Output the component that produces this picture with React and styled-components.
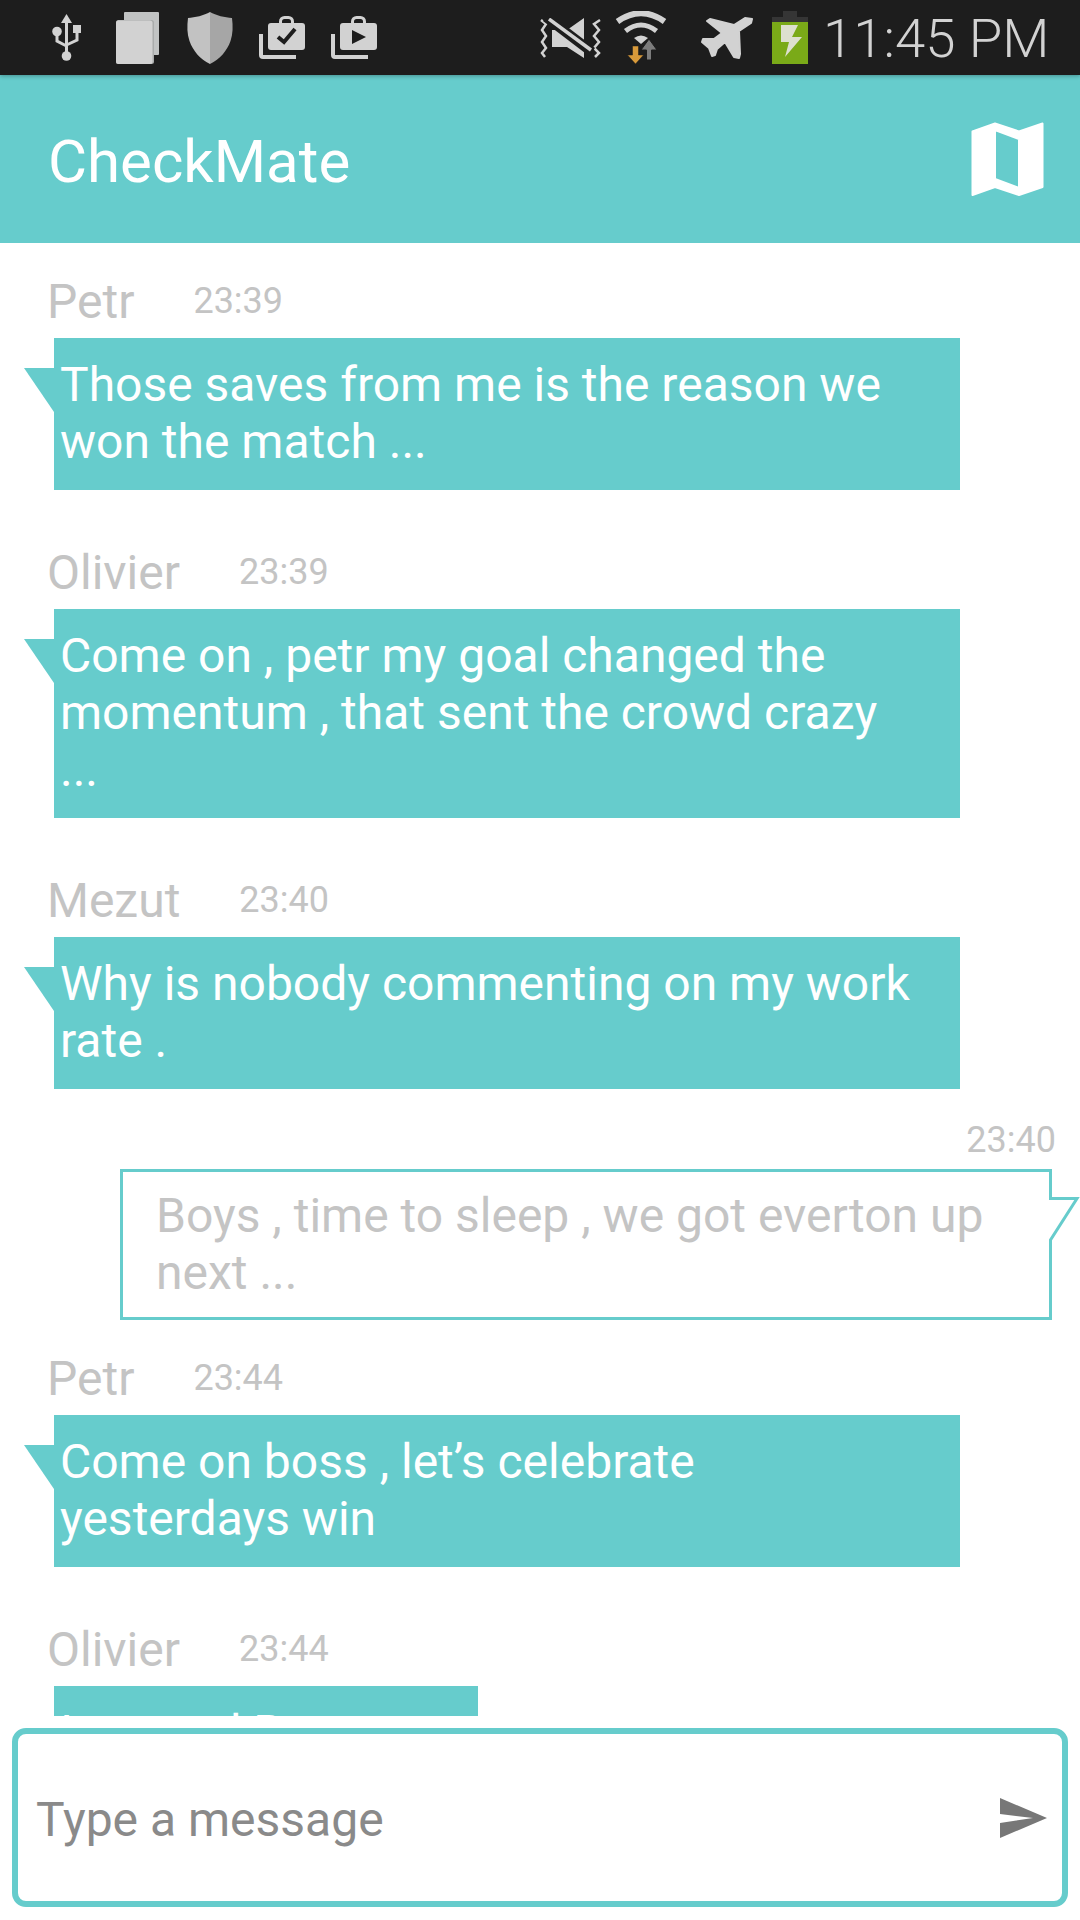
import React from "react";
import styled, {createGlobalStyle} from "styled-components";

const TEAL = "#66cccc";
const ICON = "#d2d2d2";

const GlobalStyle = createGlobalStyle`
  html, body {
    margin: 0;
    padding: 0;
    background: #fff;
    font-family: Roboto, "Liberation Sans", sans-serif;
  }
`

const Screen = styled.div`
  width: 1080px;
  height: 1920px;
  display: flex;
  flex-direction: column;
  overflow: hidden;
  background: #fff;
`

const StatusBar = styled.div`
  height: 75px;
  flex: none;
  display: flex;
  align-items: center;
  background: #1d1d1d;
  box-shadow: 0 1px 4px rgba(0, 0, 0, 0.3);
  z-index: 1;
`

const StatusIcon = styled.svg`
  flex: none;
  display: block;
  margin-left: ${props => props.$left}px;
`

const Clock = styled.span`
  margin-left: 15px;
  font-size: 54.500px;
  font-weight: 300;
  color: ${ICON};
  white-space: nowrap;
`

const Header = styled.div`
  box-sizing: border-box;
  height: 168px;
  flex: none;
  display: flex;
  align-items: center;
  justify-content: space-between;
  padding: 0 36px 0 48px;
  background: ${TEAL};
`

const Title = styled.h1`
  margin: 4px 0 0;
  font-size: 60px;
  font-weight: 400;
  color: #fff;
`

const MessageList = styled.div`
  height: 1473px;
  flex: none;
  overflow: hidden;
`

const Incoming = styled.div`
  padding: 25px 0 24px;
`

const Head = styled.div`
  box-sizing: border-box;
  height: 70px;
  display: flex;
  align-items: center;
  gap: 59px;
  padding: 0 0 4px 47px;
`

const Name = styled.span`
  font-size: 48px;
  color: #c4c4c4;
`

const Time = styled.span`
  font-size: 36px;
  color: #c4c4c4;
`

const OutHead = styled.div`
  box-sizing: border-box;
  height: 56px;
  display: flex;
  align-items: center;
  justify-content: flex-end;
  padding: 0 24px 3px 0;
`

const Bubble = styled.div`
  position: relative;
  box-sizing: border-box;
  width: ${props => props.$width || 906}px;
  margin-left: 54px;
  padding: 18px 42px 20px 6px;
  font-size: 48px;
  line-height: 57px;
  color: #fff;
  background: ${TEAL};

  &::before {
    content: "";
    position: absolute;
    left: -30px;
    top: 30px;
    width: 30px;
    height: 44px;
    background: ${TEAL};
    clip-path: polygon(0 0, 100% 0, 100% 100%);
  }
`

const OutBubble = styled.div`
  position: relative;
  box-sizing: border-box;
  margin: 0 28px 0 120px;
  padding: 15px 30px 16px 33px;
  border: 3px solid ${TEAL};
  font-size: 48px;
  line-height: 57px;
  color: #c4c4c4;
  background: #fff;
`

const OutTail = styled.svg`
  position: absolute;
  top: 23px;
  right: -31px;
  display: block;
`

const Footer = styled.div`
  flex: 1;
  padding: 12px 12px 0;
`

const InputBox = styled.div`
  box-sizing: border-box;
  height: 179px;
  display: flex;
  align-items: center;
  justify-content: space-between;
  padding: 0 15px 0 18px;
  border: 6px solid ${TEAL};
  border-radius: 14px;
`

const Placeholder = styled.span`
  margin-top: 4px;
  font-size: 48px;
  color: #8a8a8a;
`

const Usb = () => (
    <StatusIcon $left={52} width="29" height="47" viewBox="0 0 29 47">
        <path d="M14.5 0L20 9H9Z" fill={ICON}/>
        <path d="M14.5 8V40M5 20V27L14.5 32M25 18V26L14.5 31" fill="none" stroke={ICON} strokeWidth="3"/>
        <circle cx="5" cy="17.5" r="4.8" fill={ICON}/>
        <circle cx="14.5" cy="42" r="4.8" fill={ICON}/>
        <rect x="21" y="11" width="8" height="8" fill={ICON}/>
    </StatusIcon>
)

const Pages = () => (
    <StatusIcon $left={35} width="43" height="52" viewBox="0 0 43 52">
        <rect x="8" y="0" width="35" height="43" rx="1" fill="#c1c3c3"/>
        <rect x="0" y="8" width="38" height="44" rx="2.5" fill="#a9abab"/>
        <rect x="0" y="8.5" width="36.5" height="43.5" rx="2.5" fill={ICON}/>
    </StatusIcon>
)

const Shield = () => (
    <StatusIcon $left={28} width="46" height="52" viewBox="0 0 46 52">
        <path d="M23 0C17 3.500 8 5.500 1 6C0 14 0 22 2.500 29C6 39 13 47 23 52Z" fill="#c2c2c2"/>
        <path d="M23 0C29 3.500 38 5.500 45 6C46 14 46 22 43.500 29C40 39 33 47 23 52Z" fill="#a6a6a6"/>
    </StatusIcon>
)

const CaseBase = ({left, children}) => (
    <StatusIcon $left={left} width="46" height="43" viewBox="0 0 46 43">
        <path d="M2 18V39Q2 41 4 41H37" fill="none" stroke={ICON} strokeWidth="4"/>
        <rect x="9" y="7" width="37" height="27" rx="3" fill={ICON}/>
        <rect x="21.500" y="1.500" width="12" height="9" rx="4" fill="none" stroke={ICON} strokeWidth="3"/>
        {children}
    </StatusIcon>
)

const MuteVibrate = () => (
    <StatusIcon $left={163} width="61" height="40" viewBox="0 0 61 40">
        <path d="M1 2L6 6L2 12L6 18L2 24L6 30L2 35L5 39M60 2L54 6L59 12L54 18L59 24L54 30L59 35L55 39" fill="none" stroke={ICON} strokeWidth="2.500"/>
        <path d="M12 12H27L44 0V40L27 29H12Z" fill={ICON}/>
        <path d="M6 -1L52 34" stroke="#1d1d1d" strokeWidth="10"/>
        <path d="M9 1L51 32" stroke={ICON} strokeWidth="3.500"/>
    </StatusIcon>
)

const Wifi = () => (
    <StatusIcon $left={14} width="52" height="53" viewBox="0 0 52 53">
        <path d="M2.500 10.500Q26 -6 49.500 10.500" fill="none" stroke={ICON} strokeWidth="6"/>
        <path d="M10.500 20Q26 8 41.500 20" fill="none" stroke={ICON} strokeWidth="5"/>
        <path d="M19 27Q26 22 33 27L26 33Z" fill={ICON}/>
        <path d="M31.500 49V39H26L34 28L42 39H36.500V49Z" fill="#7c7c7c" stroke="#1d1d1d" strokeWidth="1"/>
        <path d="M17.500 35H23.500V44H28.500L20.500 53L12.500 44H17.500Z" fill="#d99a3a" stroke="#1d1d1d" strokeWidth="0.500"/>
    </StatusIcon>
)

const Plane = () => (
    <StatusIcon $left={34} width="53" height="44" viewBox="0 0 53 44">
        <path
            d="M51 3L44 2L33 9L9 3L6 5L21 17L13 23H2L1 26L8 32L11 40L14 39L16 33L24 26L33 41L38 42L39 38L38 15L50 7Z"
            fill={ICON} stroke={ICON} strokeWidth="2" strokeLinejoin="round"
        />
    </StatusIcon>
)

const Battery = () => (
    <StatusIcon $left={18} width="36" height="53" viewBox="0 0 36 53">
        <rect x="11" y="0" width="14" height="6" fill="#353535"/>
        <rect x="0" y="6" width="36" height="5" fill="#353535"/>
        <rect x="0" y="11" width="36" height="42" fill="#7aaa18"/>
        <path d="M9 14H26L20 26H30L13 46L17 31H9Z" fill="#dde0cf"/>
    </StatusIcon>
)

const MapIcon = () => (
    <svg width="73" height="74" viewBox="0 0 73 74">
        <path
            d="M1.500 9.500L24 1.500L48 9.500L71.500 1.500V65L48 73L24 65L1.500 73ZM24 8V57L48 66V17Z"
            fill="#fff" fillRule="evenodd" stroke="#fff" strokeWidth="2" strokeLinejoin="round"
        />
    </svg>
)

const SendIcon = () => (
    <svg width="47" height="40" viewBox="0 0 47 40">
        <path d="M0 0L47 20L0 40V25L33 20L0 16Z" fill="#777"/>
    </svg>
)

const messages = [
    {name: "Petr", time: "23:39", text: "Those saves from me is the reason we won the match ..."},
    {name: "Olivier", time: "23:39", text: "Come on , petr my goal changed the momentum , that sent the crowd crazy ..."},
    {name: "Mezut", time: "23:40", text: "Why is nobody commenting on my work rate ."},
    {mine: true, time: "23:40", text: "Boys , time to sleep , we got everton up next ..."},
    {name: "Petr", time: "23:44", text: "Come on boss , let’s celebrate yesterdays win"},
    {name: "Olivier", time: "23:44", text: "I second Boss", width: 424},
]

export default function App() {
    return (
        <Screen>
            <GlobalStyle/>
            <StatusBar>
                <Usb/>
                <Pages/>
                <Shield/>
                <CaseBase left={26}>
                    <path d="M19 21L25 26L36 13" fill="none" stroke="#1d1d1d" strokeWidth="4"/>
                </CaseBase>
                <CaseBase left={26}>
                    <path d="M21 14L35 21L21 28Z" fill="#1d1d1d"/>
                </CaseBase>
                <MuteVibrate/>
                <Wifi/>
                <Plane/>
                <Battery/>
                <Clock>11:45 PM</Clock>
            </StatusBar>
            <Header>
                <Title>CheckMate</Title>
                <MapIcon/>
            </Header>
            <MessageList>
                {messages.map((m, i) => m.mine ? (
                    <div key={i}>
                        <OutHead><Time>{m.time}</Time></OutHead>
                        <OutBubble>
                            {m.text}
                            <OutTail width="33" height="50" viewBox="0 0 33 50">
                                <path d="M0 5H29L3 45H0Z" fill="#fff"/>
                                <path d="M3.500 0V3.500H30L3.500 45V50" fill="none" stroke={TEAL} strokeWidth="3"/>
                            </OutTail>
                        </OutBubble>
                    </div>
                ) : (
                    <Incoming key={i}>
                        <Head>
                            <Name>{m.name}</Name>
                            <Time>{m.time}</Time>
                        </Head>
                        <Bubble $width={m.width}>{m.text}</Bubble>
                    </Incoming>
                ))}
            </MessageList>
            <Footer>
                <InputBox>
                    <Placeholder>Type a message</Placeholder>
                    <SendIcon/>
                </InputBox>
            </Footer>
        </Screen>
    )
}
